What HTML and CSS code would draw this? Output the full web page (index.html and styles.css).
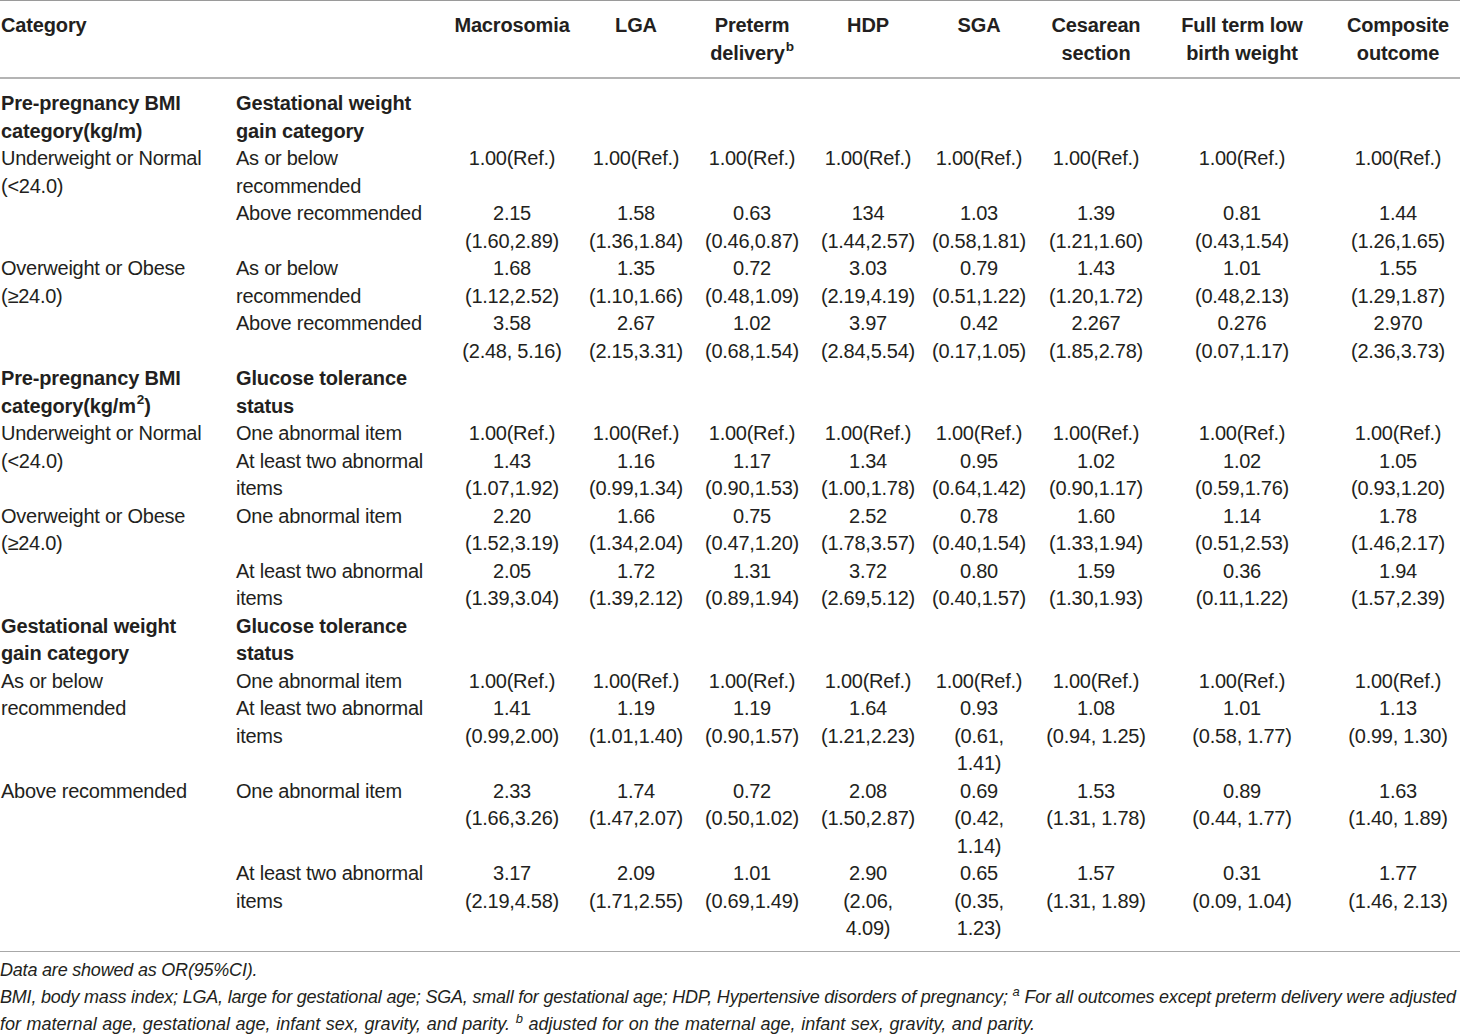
FILE: index.html
```html
<!DOCTYPE html>
<html lang="en">
<head>
<meta charset="utf-8">
<title>Table</title>
<link rel="stylesheet" href="styles.css">
</head>
<body>
<table class="tbl">
  <colgroup>
    <col class="c-cat"><col class="c-sub"><col class="c-mac"><col class="c-lga"><col class="c-pre"><col class="c-hdp"><col class="c-sga"><col class="c-ces"><col class="c-full"><col class="c-comp">
  </colgroup>
  <thead>
    <tr>
      <th class="left" colspan="2">Category</th>
      <th>Macrosomia</th>
      <th>LGA</th>
      <th>Preterm delivery<sup>b</sup></th>
      <th>HDP</th>
      <th>SGA</th>
      <th>Cesarean section</th>
      <th>Full term low birth weight</th>
      <th>Composite outcome</th>
    </tr>
  </thead>
  <tbody>
    <tr class="first">
      <th class="left">Pre-pregnancy BMI category(kg/m)</th>
      <th class="left">Gestational weight gain category</th>
      <td></td><td></td><td></td><td></td><td></td><td></td><td></td><td></td>
    </tr>
    <tr>
      <td class="left">Underweight or Normal (&lt;24.0)</td>
      <td class="left">As or below recommended</td>
      <td>1.00(Ref.)</td><td>1.00(Ref.)</td><td>1.00(Ref.)</td><td>1.00(Ref.)</td><td>1.00(Ref.)</td><td>1.00(Ref.)</td><td>1.00(Ref.)</td><td>1.00(Ref.)</td>
    </tr>
    <tr>
      <td class="left"></td>
      <td class="left">Above recommended</td>
      <td>2.15<br>(1.60,2.89)</td><td>1.58<br>(1.36,1.84)</td><td>0.63<br>(0.46,0.87)</td><td>134<br>(1.44,2.57)</td><td>1.03<br>(0.58,1.81)</td><td>1.39<br>(1.21,1.60)</td><td>0.81<br>(0.43,1.54)</td><td>1.44<br>(1.26,1.65)</td>
    </tr>
    <tr>
      <td class="left">Overweight or Obese (≥24.0)</td>
      <td class="left">As or below recommended</td>
      <td>1.68<br>(1.12,2.52)</td><td>1.35<br>(1.10,1.66)</td><td>0.72<br>(0.48,1.09)</td><td>3.03<br>(2.19,4.19)</td><td>0.79<br>(0.51,1.22)</td><td>1.43<br>(1.20,1.72)</td><td>1.01<br>(0.48,2.13)</td><td>1.55<br>(1.29,1.87)</td>
    </tr>
    <tr>
      <td class="left"></td>
      <td class="left">Above recommended</td>
      <td>3.58<br>(2.48, 5.16)</td><td>2.67<br>(2.15,3.31)</td><td>1.02<br>(0.68,1.54)</td><td>3.97<br>(2.84,5.54)</td><td>0.42<br>(0.17,1.05)</td><td>2.267<br>(1.85,2.78)</td><td>0.276<br>(0.07,1.17)</td><td>2.970<br>(2.36,3.73)</td>
    </tr>

    <tr>
      <th class="left">Pre-pregnancy BMI category(kg/m<sup>2</sup>)</th>
      <th class="left">Glucose tolerance status</th>
      <td></td><td></td><td></td><td></td><td></td><td></td><td></td><td></td>
    </tr>
    <tr>
      <td class="left" rowspan="2">Underweight or Normal (&lt;24.0)</td>
      <td class="left">One abnormal item</td>
      <td>1.00(Ref.)</td><td>1.00(Ref.)</td><td>1.00(Ref.)</td><td>1.00(Ref.)</td><td>1.00(Ref.)</td><td>1.00(Ref.)</td><td>1.00(Ref.)</td><td>1.00(Ref.)</td>
    </tr>
    <tr>
      <td class="left">At least two abnormal items</td>
      <td>1.43<br>(1.07,1.92)</td><td>1.16<br>(0.99,1.34)</td><td>1.17<br>(0.90,1.53)</td><td>1.34<br>(1.00,1.78)</td><td>0.95<br>(0.64,1.42)</td><td>1.02<br>(0.90,1.17)</td><td>1.02<br>(0.59,1.76)</td><td>1.05<br>(0.93,1.20)</td>
    </tr>
    <tr>
      <td class="left">Overweight or Obese (≥24.0)</td>
      <td class="left">One abnormal item</td>
      <td>2.20<br>(1.52,3.19)</td><td>1.66<br>(1.34,2.04)</td><td>0.75<br>(0.47,1.20)</td><td>2.52<br>(1.78,3.57)</td><td>0.78<br>(0.40,1.54)</td><td>1.60<br>(1.33,1.94)</td><td>1.14<br>(0.51,2.53)</td><td>1.78<br>(1.46,2.17)</td>
    </tr>
    <tr>
      <td class="left"></td>
      <td class="left">At least two abnormal items</td>
      <td>2.05<br>(1.39,3.04)</td><td>1.72<br>(1.39,2.12)</td><td>1.31<br>(0.89,1.94)</td><td>3.72<br>(2.69,5.12)</td><td>0.80<br>(0.40,1.57)</td><td>1.59<br>(1.30,1.93)</td><td>0.36<br>(0.11,1.22)</td><td>1.94<br>(1.57,2.39)</td>
    </tr>

    <tr>
      <th class="left">Gestational weight gain category</th>
      <th class="left">Glucose tolerance status</th>
      <td></td><td></td><td></td><td></td><td></td><td></td><td></td><td></td>
    </tr>
    <tr>
      <td class="left" rowspan="2">As or below recommended</td>
      <td class="left">One abnormal item</td>
      <td>1.00(Ref.)</td><td>1.00(Ref.)</td><td>1.00(Ref.)</td><td>1.00(Ref.)</td><td>1.00(Ref.)</td><td>1.00(Ref.)</td><td>1.00(Ref.)</td><td>1.00(Ref.)</td>
    </tr>
    <tr>
      <td class="left">At least two abnormal items</td>
      <td>1.41<br>(0.99,2.00)</td><td>1.19<br>(1.01,1.40)</td><td>1.19<br>(0.90,1.57)</td><td>1.64<br>(1.21,2.23)</td><td>0.93<br>(0.61,<br>1.41)</td><td>1.08<br>(0.94, 1.25)</td><td>1.01<br>(0.58, 1.77)</td><td>1.13<br>(0.99, 1.30)</td>
    </tr>
    <tr>
      <td class="left">Above recommended</td>
      <td class="left">One abnormal item</td>
      <td>2.33<br>(1.66,3.26)</td><td>1.74<br>(1.47,2.07)</td><td>0.72<br>(0.50,1.02)</td><td>2.08<br>(1.50,2.87)</td><td>0.69<br>(0.42,<br>1.14)</td><td>1.53<br>(1.31, 1.78)</td><td>0.89<br>(0.44, 1.77)</td><td>1.63<br>(1.40, 1.89)</td>
    </tr>
    <tr class="last">
      <td class="left"></td>
      <td class="left">At least two abnormal items</td>
      <td>3.17<br>(2.19,4.58)</td><td>2.09<br>(1.71,2.55)</td><td>1.01<br>(0.69,1.49)</td><td>2.90<br>(2.06,<br>4.09)</td><td>0.65<br>(0.35,<br>1.23)</td><td>1.57<br>(1.31, 1.89)</td><td>0.31<br>(0.09, 1.04)</td><td>1.77<br>(1.46, 2.13)</td>
    </tr>
  </tbody>
</table>
<div class="notes">
  <p>Data are showed as OR(95%CI).</p>
  <p>BMI, body mass index; LGA, large for gestational age; SGA, small for gestational age; HDP, Hypertensive disorders of pregnancy; <sup>a</sup> For all outcomes except preterm delivery were adjusted<br><span class="l3">for maternal age, gestational age, infant sex, gravity, and parity. <sup>b</sup> adjusted for on the maternal age, infant sex, gravity, and parity.</span></p>
</div>
</body>
</html>
```

FILE: styles.css
```css
html, body {
  margin: 0;
  padding: 0;
  background: #ffffff;
}

body {
  color: #231f20;
  font-family: "Liberation Sans", Arial, sans-serif;
  overflow: hidden;
}

.tbl {
  width: 1460px;
  table-layout: fixed;
  border-collapse: collapse;
  font-size: 20px;
  line-height: 27.5px;
  letter-spacing: -0.25px;
  border-top: 1px solid #9a9a9a;
  border-bottom: 1px solid #a8a8a8;
}

.c-cat { width: 235px; }
.c-sub { width: 213px; }
.c-mac { width: 128px; }
.c-lga { width: 120px; }
.c-pre { width: 112px; }
.c-hdp { width: 120px; }
.c-sga { width: 102px; }
.c-ces { width: 132px; }
.c-full { width: 160px; }
.c-comp { width: 138px; }

.tbl th,
.tbl td {
  padding: 0;
  vertical-align: top;
  text-align: center;
  font-weight: normal;
}

.tbl th {
  font-weight: bold;
  letter-spacing: -0.15px;
}

.tbl th:last-child,
.tbl td:last-child {
  padding-left: 14px;
}

.tbl .left {
  text-align: left;
  padding-left: 1px;
  padding-right: 20px;
}

.tbl thead th {
  padding-top: 11px;
  padding-bottom: 10px;
  border-bottom: 2px solid #b4b4b4;
}

.tbl tbody tr.first > * {
  padding-top: 11px;
}

.tbl tbody tr.last > * {
  padding-bottom: 8px;
}

.tbl sup {
  font-size: 0.68em;
  line-height: 0;
  vertical-align: 0.6em;
  margin-left: 1px;
}

.notes {
  padding-top: 5px;
  font-family: "Liberation Sans Narrow", "Liberation Sans", Arial, sans-serif;
  font-style: italic;
  font-size: 18px;
  line-height: 27px;
  letter-spacing: -0.2px;
}

.notes .l3 {
  letter-spacing: 0;
  word-spacing: 0.6px;
}

.notes p {
  margin: 0;
}

.notes sup {
  font-size: 0.72em;
  line-height: 0;
  vertical-align: 0.55em;
}
```
